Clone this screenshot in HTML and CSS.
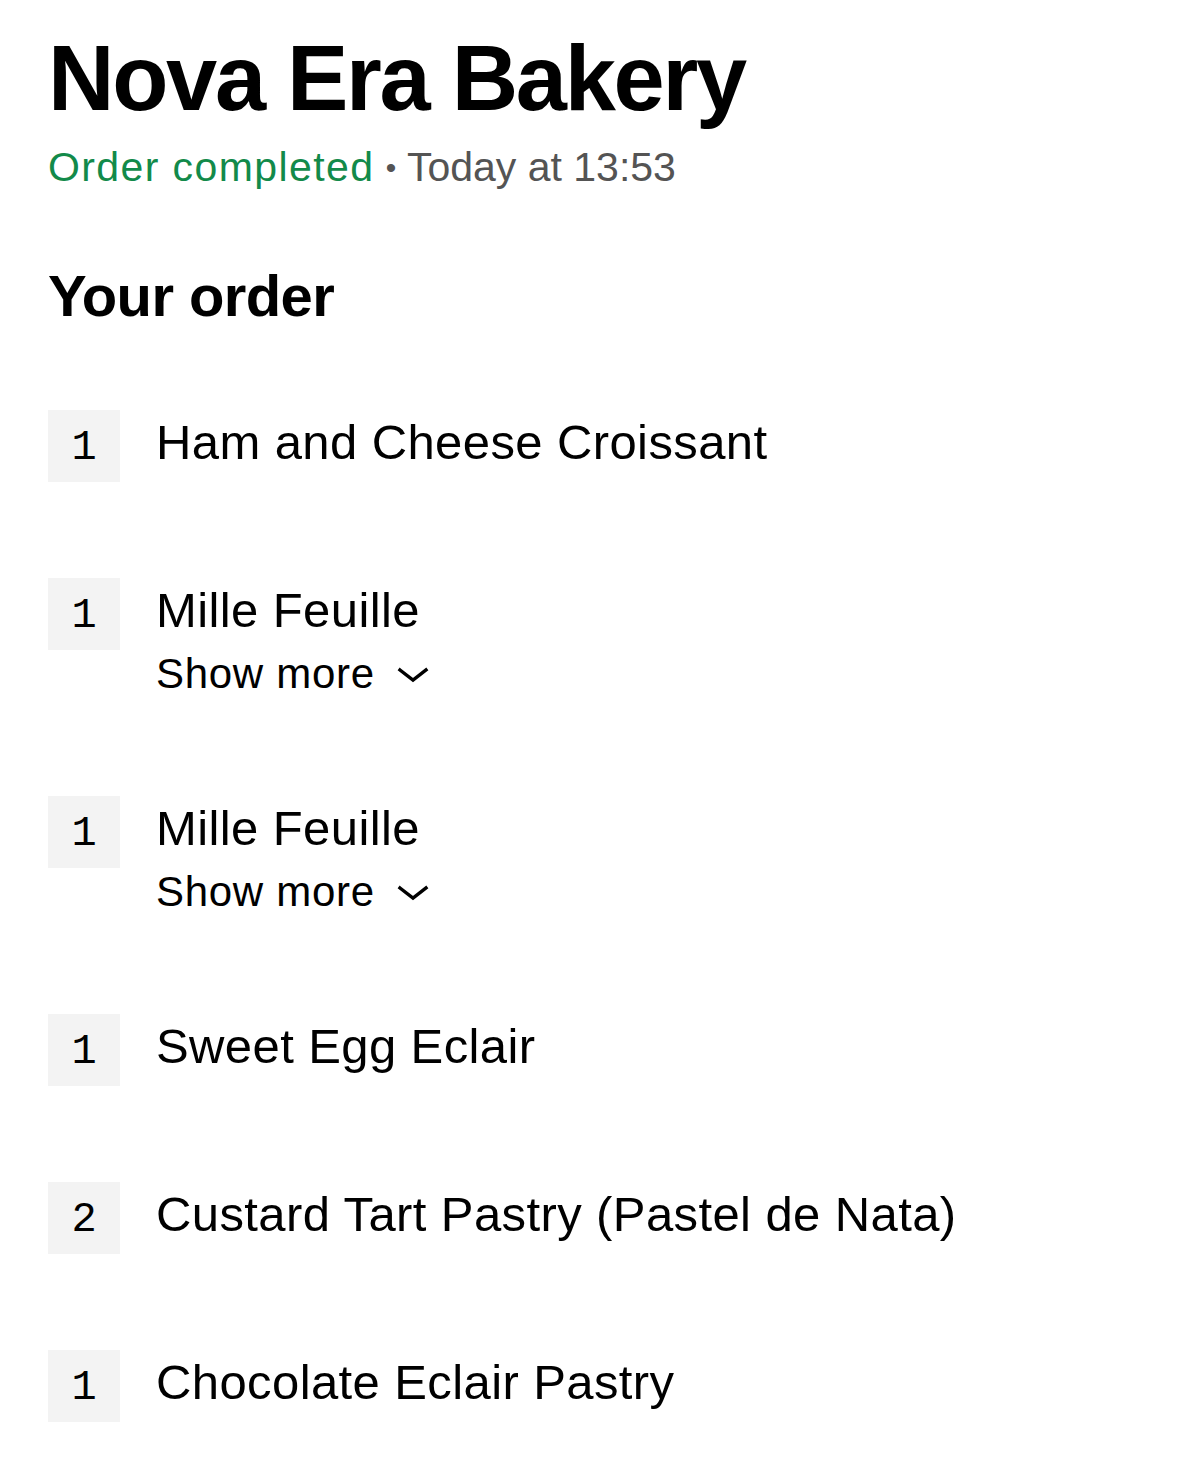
FILE: index.html
```html
<!DOCTYPE html>
<html>
<head>
    <title>Nova Era Bakery - Order</title>
    <link rel="stylesheet" href="styles.css">
</head>
<body>
    <div class="page">
        <h1 class="store-name">Nova Era Bakery</h1>
        <p class="order-status">
            <span class="status-done">Order completed</span>
            <span class="status-sep">&bull;</span>
            <span class="status-time">Today at 13:53</span>
        </p>

        <h2 class="section-title">Your order</h2>

        <ul class="order-items">
            <li class="order-item">
                <div class="qty">1</div>
                <div class="item-info">
                    <div class="item-name">Ham and Cheese Croissant</div>
                </div>
            </li>
            <li class="order-item">
                <div class="qty">1</div>
                <div class="item-info">
                    <div class="item-name">Mille Feuille</div>
                    <button class="show-more" type="button">Show more
                        <svg class="chevron" width="32" height="18" viewBox="0 0 32 18"><path d="M3 4 L16 14 L29 4" fill="none" stroke="#000" stroke-width="3.4" stroke-linecap="square"/></svg>
                    </button>
                </div>
            </li>
            <li class="order-item">
                <div class="qty">1</div>
                <div class="item-info">
                    <div class="item-name">Mille Feuille</div>
                    <button class="show-more" type="button">Show more
                        <svg class="chevron" width="32" height="18" viewBox="0 0 32 18"><path d="M3 4 L16 14 L29 4" fill="none" stroke="#000" stroke-width="3.4" stroke-linecap="square"/></svg>
                    </button>
                </div>
            </li>
            <li class="order-item">
                <div class="qty">1</div>
                <div class="item-info">
                    <div class="item-name">Sweet Egg Eclair</div>
                </div>
            </li>
            <li class="order-item">
                <div class="qty">2</div>
                <div class="item-info">
                    <div class="item-name">Custard Tart Pastry (Pastel de Nata)</div>
                </div>
            </li>
            <li class="order-item">
                <div class="qty">1</div>
                <div class="item-info">
                    <div class="item-name">Chocolate Eclair Pastry</div>
                </div>
            </li>
        </ul>
    </div>
</body>
</html>
```

FILE: styles.css
```css
body {
    font-family: "Liberation Sans", Arial, sans-serif;
    margin: 0;
    padding: 0;
    background-color: #fff;
    color: #000;
}

.page {
    padding: 28px 48px 40px;
}

.store-name {
    margin: 0;
    font-size: 92px;
    line-height: 101px;
    font-weight: bold;
    letter-spacing: -2.3px;
}

.order-status {
    margin: 14px 0 0;
    font-size: 41px;
    line-height: 48px;
    color: #545454;
}

.status-done {
    color: #128a4a;
    letter-spacing: 1.4px;
}

.status-sep {
    font-size: 30px;
    vertical-align: 3px;
}

.section-title {
    margin: 71px 0 0;
    font-size: 58px;
    line-height: 66px;
    font-weight: bold;
    letter-spacing: -0.6px;
}

.order-items {
    list-style: none;
    margin: 81px 0 0;
    padding: 0;
    display: flex;
    flex-direction: column;
    gap: 96px;
}

.order-item {
    display: flex;
    align-items: flex-start;
    gap: 36px;
}

.qty {
    flex: none;
    width: 72px;
    height: 72px;
    background-color: #f3f3f3;
    display: flex;
    justify-content: center;
    align-items: center;
    padding-top: 3px;
    box-sizing: border-box;
    font-family: "Liberation Mono", "Courier New", monospace;
    font-size: 42px;
}

.item-info {
    padding-top: 4px;
}

.item-name {
    font-size: 49px;
    line-height: 56px;
    letter-spacing: 0.4px;
}

.show-more {
    display: flex;
    align-items: center;
    gap: 22px;
    margin-top: 10px;
    padding: 0;
    border: none;
    background: none;
    font-family: inherit;
    font-size: 42px;
    line-height: 52px;
    letter-spacing: 0.7px;
    color: #000;
    cursor: pointer;
}

.chevron {
    display: block;
    margin-top: 2px;
}
```
